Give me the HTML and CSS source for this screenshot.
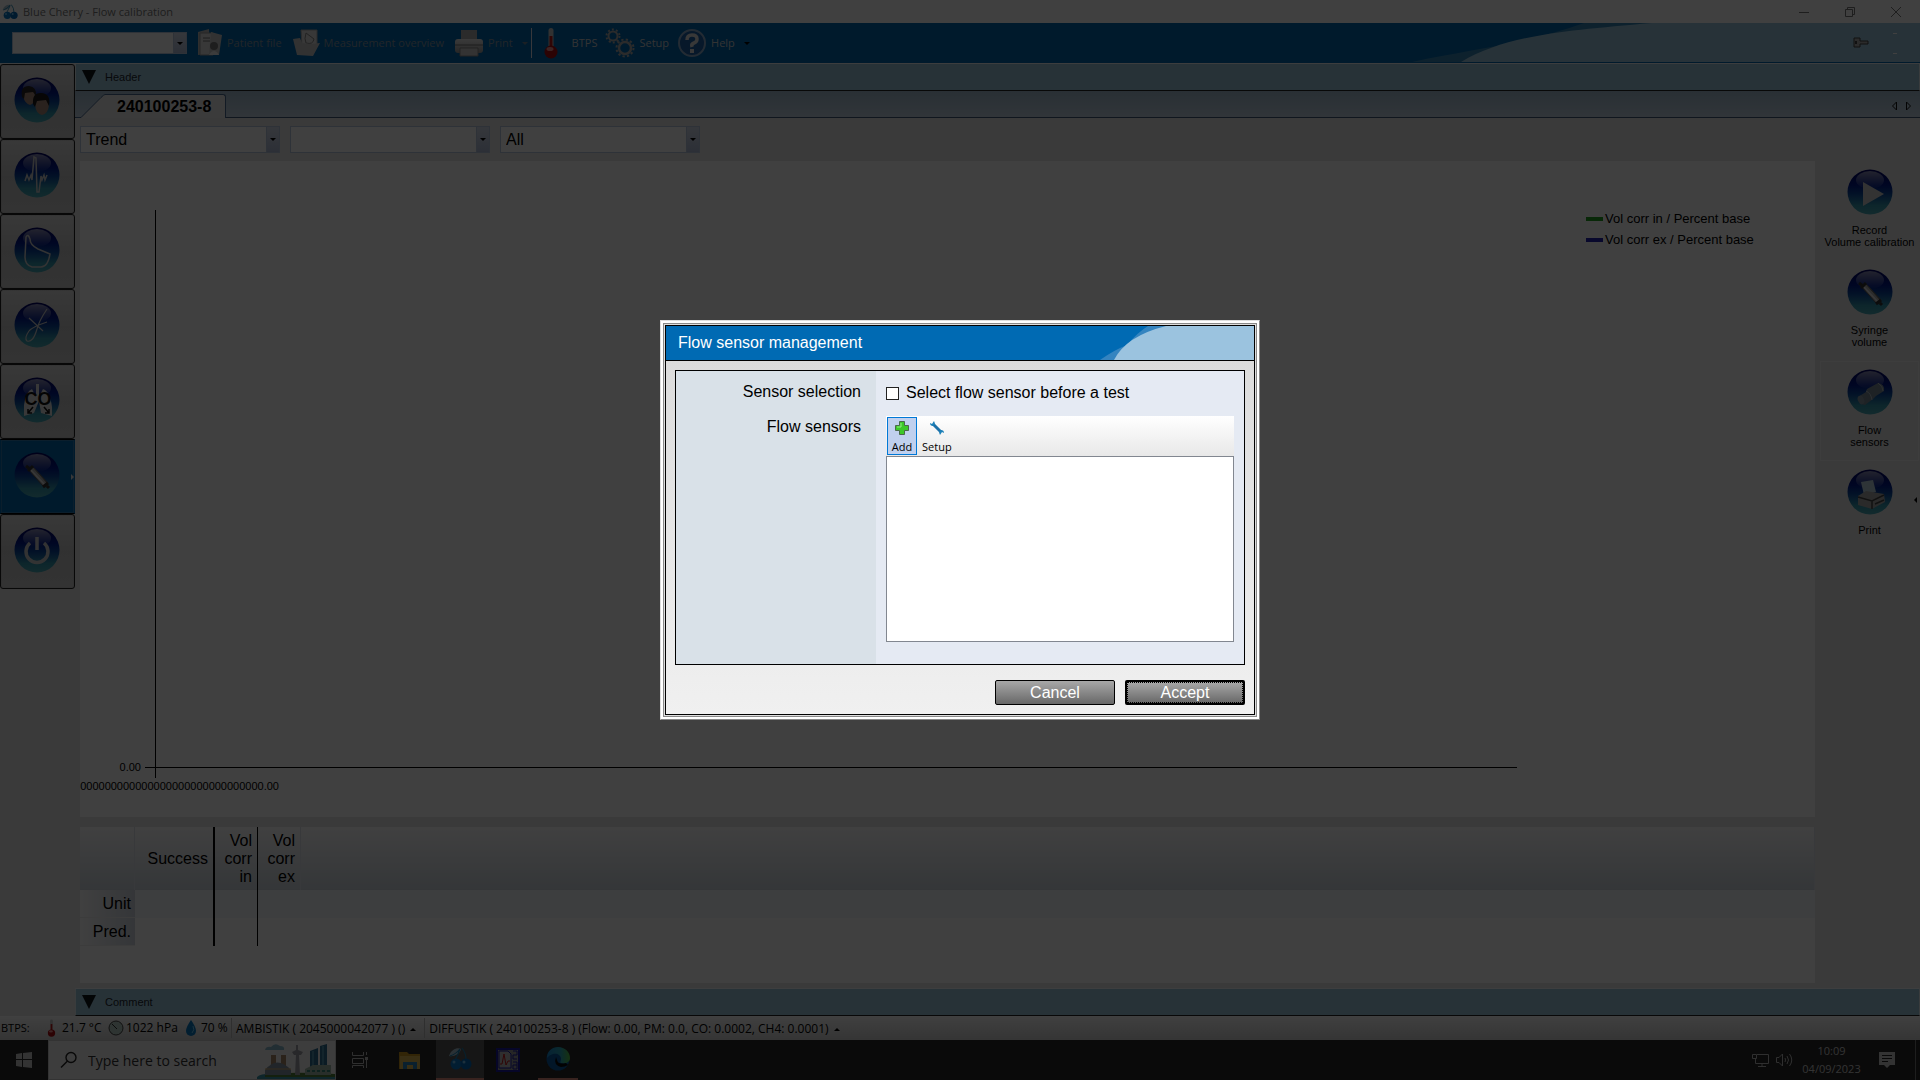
FILE: index.html
```html
<!DOCTYPE html>
<html lang="en">
<head>
<meta charset="utf-8">
<title>Blue Cherry - Flow calibration</title>
<link rel="stylesheet" href="styles.css">
</head>
<body>
<svg width="0" height="0" class="defs" aria-hidden="true">
  <defs>
    <linearGradient id="g-orb" x1="0" y1="0" x2="0" y2="1"><stop offset="0" stop-color="#000060"/><stop offset=".35" stop-color="#001a8c"/><stop offset=".55" stop-color="#0c4a9c"/><stop offset=".8" stop-color="#3496ac"/><stop offset="1" stop-color="#4aa8b4"/></linearGradient>
    <linearGradient id="g-shine" x1="0" y1="0" x2="0" y2="1"><stop offset="0" stop-color="#fff" stop-opacity=".55"/><stop offset="1" stop-color="#fff" stop-opacity="0"/></linearGradient>
    <linearGradient id="g-grey" x1="0" y1="0" x2="0" y2="1"><stop offset="0" stop-color="#e8e8e8"/><stop offset="1" stop-color="#9a9a9a"/></linearGradient>
    <linearGradient id="g-edge" x1="0" y1="0" x2="1" y2="0"><stop offset="0" stop-color="#1a88d0"/><stop offset=".6" stop-color="#2aa8b8"/><stop offset="1" stop-color="#58c840"/></linearGradient>
    <symbol id="orb" viewBox="0 0 46 46"><circle cx="23" cy="23" r="22.5" fill="url(#g-orb)"/><ellipse cx="23" cy="11" rx="14" ry="9" fill="url(#g-shine)"/></symbol>
    <symbol id="cherry" viewBox="0 0 24 24"><path d="M1 9C3 2 10 0 13 2C12 7 6 10 1 9Z" fill="#a8c4d4"/><path d="M2 9Q8 7 12 2M12 2Q10 8 7 13M14 1Q18 6 18 13" fill="none" stroke="#1a80b0" stroke-width="1.2"/><circle cx="8" cy="17" r="5.5" fill="#0878c8"/><circle cx="18" cy="17" r="5.5" fill="#0068b8"/><circle cx="6" cy="15" r="1.5" fill="#70c0f0"/><circle cx="16" cy="15" r="1.5" fill="#70c0f0"/></symbol>
    <symbol id="thermo" viewBox="0 0 16 32"><rect x="5.500" y="1" width="5" height="22" rx="2.500" fill="#c8c8c8"/><rect x="6.500" y="9" width="3" height="15" fill="#c01818"/><circle cx="8" cy="25" r="6.500" fill="#b00c10"/><ellipse cx="7" cy="22" rx="3.500" ry="2" fill="#f09090"/></symbol>
    <symbol id="syringe" viewBox="0 0 46 46"><path d="M14 17L18 14L34 31L33 35L29 34Z" fill="#b0b0b0" stroke="#555" stroke-width="1"/><path d="M17 18L31 33" stroke="#e0e0e0" stroke-width="1.500"/><path d="M20 16L33 31" stroke="#666" stroke-width="1"/><path d="M12 14L16 17M14 19L19 14M29 35L34 31M33 34L35 36" stroke="#333" stroke-width="3"/></symbol>
  </defs>
</svg>
<div class="screen">
  <header class="titlebar">
    <svg class="app-icon" viewBox="0 0 24 24"><use href="#cherry"/></svg>
    <span>Blue Cherry - Flow calibration</span>
    <div class="window-buttons">
      <button aria-label="Minimise"><svg width="12" height="12"><path d="M1 6.500H11" stroke="#777"/></svg></button>
      <button aria-label="Restore"><svg width="12" height="12" fill="none" stroke="#777"><path d="M1.500 3.500H8.500V10.500H1.500ZM3.500 3V1.500H10.500V8.500H9"/></svg></button>
      <button aria-label="Close"><svg width="12" height="12" stroke="#777"><path d="M1 1L11 11M11 1L1 11"/></svg></button>
    </div>
  </header>

  <nav class="toolbar" aria-label="Main toolbar">
    <svg class="swoosh" width="508" height="39" viewBox="0 0 508 39"><path d="M0 39C60 26 110 22 172 0H260V39Z" fill="#3484b4"/><path d="M49 39C95 12 150 8 240 0H508V39Z" fill="#9bc7de"/></svg>
    <div class="combo patient-combo"><select aria-label="Patient"><option></option></select></div>
    <button class="tool patient" disabled><svg width="28" height="30" viewBox="0 0 28 30"><path d="M3 4L14 1L15 26L3 27Z" fill="#bbb"/><path d="M5 5H18V27H5Z" fill="#ddd" stroke="#999"/><path d="M16 4L27 7L24 27H14Z" fill="#c8c8c8"/><path d="M8 10H15M8 13H15" stroke="#777"/><circle cx="19" cy="18" r="4" fill="#777"/><path d="M14 27Q19 19 24 27Z" fill="#eee"/></svg>Patient file</button>
    <button class="tool overview" disabled><svg width="30" height="30" viewBox="0 0 30 30"><path d="M9 2H25V19L10 20Z" fill="#ddd" stroke="#aaa"/><path d="M14 5Q12 11 14 15Q21 17 22 11Z" fill="none" stroke="#888"/><path d="M1 11L8 10L10 15L19 16L28 15L21 28L5 27Z" fill="#c8c8c8"/></svg>Measurement overview</button>
    <button class="tool print" disabled><svg width="30" height="30" viewBox="0 0 30 30"><path d="M7 2H23V13H7Z" fill="#aaa"/><rect x="1" y="11" width="28" height="14" rx="3" fill="url(#g-grey)"/><path d="M1 17H29" stroke="#777"/><path d="M6 20H24V28H6Z" fill="#ccc" stroke="#888"/></svg>Print<i class="caret faded"></i></button>
    <span class="divider"></span>
    <button class="tool btps"><svg width="16" height="32"><use href="#thermo"/></svg>BTPS</button>
    <button class="tool setup"><svg width="30" height="30" viewBox="0 0 30 30" fill="none" stroke="#aaa"><circle cx="8" cy="8" r="4.500" stroke-width="2"/><circle cx="8" cy="8" r="6.500" stroke-width="2" stroke-dasharray="2 2.100"/><circle cx="20" cy="20" r="6" stroke-width="2.500"/><circle cx="20" cy="20" r="8.500" stroke-width="2" stroke-dasharray="2.300 2.200"/></svg>Setup</button>
    <button class="tool help"><svg width="30" height="30" viewBox="0 0 30 30"><circle cx="15" cy="15" r="13" fill="#1c60a8" stroke="#8caccc" stroke-width="2"/><path d="M10 12Q10 7 15 7T20 11Q20 14 17 15T15 19" fill="none" stroke="#ddd" stroke-width="3.500"/><rect x="13" y="21" width="4" height="4" fill="#ddd"/></svg>Help<i class="caret"></i></button>
    <svg class="key" width="16" height="12" viewBox="0 0 16 12" fill="#aaa" stroke="#444"><path d="M1 1H7V4H15V7H7V10H1Z"/><path d="M3 4V7" stroke-width="2"/></svg>
    <span class="grip"></span>
  </nav>

  <div class="workspace">
    <nav class="sidebar" aria-label="Modules">
      <button aria-label="Patients"><svg viewBox="0 0 46 46"><use href="#orb"/><path d="M9 19Q9 12 15 12Q21 12 21 19Q21 27 16 28Q11 27 9 19Z" fill="#a88878"/><path d="M8 20Q6 9 15 9Q23 10 22 19L19 15L11 16L10 22Z" fill="#2a2624"/><path d="M21 28Q21 20 28 20Q35 20 35 28Q34 37 28 38Q22 37 21 28Z" fill="#a88878"/><path d="M19 27Q18 15 28 16Q37 17 35 29L32 23L23 24L21 30Z" fill="#1c1a1a"/></svg></button>
      <button aria-label="Spirometry"><svg viewBox="0 0 46 46"><use href="#orb"/><path d="M11 29L13 23L15 28L17 23L18 28L20 5L22 6L23 40L25 40L27 24L28 28L30 23L31 28L33 23" fill="none" stroke="#ccc" stroke-width="1.500"/></svg></button>
      <button aria-label="Flow volume"><svg viewBox="0 0 46 46"><use href="#orb"/><path d="M12 10Q14 6 16 12Q16 18 24 22L36 27Q34 40 27 40H18Q11 38 11 30Z" fill="none" stroke="#ccc" stroke-width="1.500"/></svg></button>
      <button aria-label="Washout"><svg viewBox="0 0 46 46"><use href="#orb"/><path d="M15 16L29 29M33 7Q25 19 23 27Q19 41 13 39Q10 36 15 29Q18 25 33 20" fill="none" stroke="#ccc" stroke-width="1.200"/></svg></button>
      <button aria-label="CO diffusion"><svg viewBox="0 0 46 46"><use href="#orb"/><path d="M22 7H25V20L29 12Q36 14 38 30V39L27 36L25 24L20 36L10 39V28Q12 14 18 12L22 20Z" fill="#ddd"/><text x="24" y="28" class="co">CO</text><path d="M19 30L14 36M30 30L35 36M14 32V36H18M31 36H35V32" fill="none" stroke="#111" stroke-width="1.500"/></svg></button>
      <button class="active" aria-label="Calibration"><svg viewBox="0 0 46 46"><use href="#orb"/><use href="#syringe"/></svg></button>
      <button aria-label="Power"><svg viewBox="0 0 46 46"><use href="#orb"/><path d="M16 16A11 11 0 1 0 30 16" fill="none" stroke="#ccc" stroke-width="3.500"/><path d="M23 10V23" stroke="#ccc" stroke-width="3.500"/></svg></button>
    </nav>

    <main class="main">
      <button class="section-bar"><i></i>Header</button>
      <div class="tabstrip" role="tablist">
        <svg width="29" height="24" viewBox="0 0 29 24"><path d="M0 23.500H5L25 3.500Q28 .5 29 .5V24H0Z" fill="#ececec"/><path d="M0 23.500H5L25 3.500Q28 .5 29 .5" fill="none" stroke="#4a6a90"/></svg>
        <button class="tab" role="tab" aria-selected="true">240100253-8</button>
        <div class="tab-scroll"><svg width="20" height="10" fill="none" stroke="#111"><path d="M5.500 1V9L1.500 5ZM15.500 1V9L19.500 5Z"/></svg></div>
      </div>

      <div class="content">
        <div class="left">
          <div class="filters">
            <div class="combo"><select aria-label="View"><option>Trend</option></select></div>
            <div class="combo"><select aria-label="Parameter"><option></option></select></div>
            <div class="combo"><select aria-label="Range"><option>All</option></select></div>
          </div>
          <section class="chart">
            <span class="y-label">0.00</span>
            <i class="y-axis"></i>
            <i class="x-axis"></i>
            <div class="x-label">0000000000000000000000000000000.00</div>
            <ul class="legend"><li><i class="in"></i>Vol corr in / Percent base</li><li><i class="ex"></i>Vol corr ex / Percent base</li></ul>
          </section>
          <section class="results">
            <table>
              <thead><tr><th class="c-row"></th><th class="c-success">Success</th><th class="c-in">Vol corr in</th><th class="c-ex">Vol corr ex</th><th></th></tr></thead>
              <tbody>
                <tr class="unit"><th>Unit</th><td class="c-success"></td><td class="c-in"></td><td class="c-ex"></td><td></td></tr>
                <tr><th>Pred.</th><td class="c-success"></td><td class="c-in"></td><td></td><td></td></tr>
              </tbody>
            </table>
          </section>
        </div>
        <aside class="actions">
          <button><svg viewBox="0 0 46 46"><use href="#orb"/><path d="M16 13L37 25L16 37Z" fill="#ccc"/></svg><span>Record<br>Volume calibration</span></button>
          <button><svg viewBox="0 0 46 46"><use href="#orb"/><use href="#syringe"/></svg><span>Syringe<br>volume</span></button>
          <button class="hot"><svg viewBox="0 0 46 46"><use href="#orb"/><path d="M11 28L19 23L20 20L31 14Q38 15 37 22L29 27L26 30L18 36Q11 35 11 28Z" fill="#778894"/><path d="M19 22Q24 24 25 31M31 14Q36 17 36 22" fill="none" stroke="#b0bcc4"/><ellipse cx="14" cy="31" rx="3" ry="4.500" transform="rotate(-25 14 31)" fill="#8898a4"/></svg><span>Flow<br>sensors</span></button>
          <button><svg viewBox="0 0 46 46"><use href="#orb"/><path d="M14 13L26 11L29 23L17 26Z" fill="#b8d0dc"/><path d="M11 27L19 22L37 25L38 33L25 40L11 36Z" fill="#a8a8a8"/><path d="M11 28L25 32L37 26M25 32V40M28 35L37 31" fill="none" stroke="#444" stroke-width="1.500"/></svg><span>Print</span></button>
          <i class="expand"></i>
        </aside>
      </div>
      <button class="section-bar comment"><i></i>Comment</button>
    </main>
  </div>

  <footer class="statusbar">
    <span class="btps-label">BTPS:</span>
    <span class="temp"><svg width="9" height="18" viewBox="2 0 12 32"><use href="#thermo" width="16" height="32"/></svg>21.7 °C</span>
    <span class="pressure"><svg width="16" height="16" viewBox="0 0 16 16"><circle cx="8" cy="8" r="7" fill="#b8d0c8" stroke="#444"/><path d="M4 4L9 9" stroke="#333"/></svg>1022 hPa</span>
    <span class="humid"><svg width="12" height="16" viewBox="0 0 12 16"><path d="M6 0Q11 7 11 11A5 5 0 0 1 1 11Q1 7 6 0Z" fill="#0878c0"/><path d="M8 6Q10 10 7 13" stroke="#70c8f0" fill="none"/></svg>70 %</span>
    <span class="device">AMBISTIK ( 2045000042077 ) () <i class="caret up"></i></span>
    <span class="device">DIFFUSTIK ( 240100253-8 ) (Flow: 0.00, PM: 0.0, CO: 0.0002, CH4: 0.0001) <i class="caret up"></i></span>
  </footer>

  <div class="taskbar">
    <button class="start" aria-label="Start"><svg width="16" height="16" fill="#ccc"><path d="M0 2L6 1V7H0ZM7 1L16 0V7H7ZM0 8H6V15L0 14ZM7 8H16V16L7 15Z"/></svg></button>
    <label class="search">
      <svg width="18" height="18" viewBox="0 0 18 18" fill="none" stroke="#222" stroke-width="1.400"><circle cx="11" cy="6.500" r="5"/><path d="M7.500 10L1 16.500"/></svg>
      <input type="text" placeholder="Type here to search" aria-label="Search">
      <svg class="skyline" width="78" height="38" viewBox="0 0 78 38"><path d="M8 9Q9 5 14 6Q18 1 23 5Q28 5 27 9Z" fill="#88b8cc"/><path d="M0 36Q4 32 20 33H78V38H0Z" fill="#3894a8"/><path d="M8 34Q30 30 78 33V36H8Z" fill="#508038"/><path d="M14 14H19V30H14ZM24 14H29V30H24Z" fill="#a88868"/><path d="M8 29Q20 14 34 29V34H8Z" fill="#8494a4"/><path d="M8 28H34" stroke="#d0a868"/><path d="M39 4H41V9L46 11L44 14H42L43 34H38L39 14H37L35 11L39 9Z" fill="#a0a0a8"/><path d="M53 10L61 7V28H53ZM63 5L70 3V28H63Z" fill="#2c6c90"/><path d="M56 10V27M66 5V27" stroke="#70b0c8"/><path d="M48 28L56 24H74V34H48Z" fill="#a0b8a8"/><path d="M50 30H73" stroke="#388878" stroke-width="2" stroke-dasharray="3 2"/></svg>
    </label>
    <button aria-label="Task view"><svg width="16" height="16" fill="none" stroke="#bbb"><path d="M.5 0V3.500H11.500V0M.5 6.500H11.500V11.500H.5ZM.5 16V13.500H11.500V16M14.500 0V3M14.500 8V16"/><path d="M13 6.500H16" stroke-width="3"/></svg></button>
    <button class="files" aria-label="File Explorer"><svg width="22" height="19"><path d="M0 1H8L10 3H21V18H0Z" fill="#c8941c"/><path d="M1 5H21V18H1Z" fill="#e0b850"/><path d="M4 18V11H18V18H14V14H8V18Z" fill="#2880b8"/></svg></button>
    <button class="running current" aria-label="Blue Cherry"><svg width="24" height="24"><use href="#cherry"/></svg></button>
    <button aria-label="ECG viewer"><svg width="24" height="24" viewBox="0 0 24 24"><rect x="1" y="1" width="22" height="22" fill="#999" stroke="#1818a0" stroke-width="2"/><path d="M3 3H12L15 6V20H3Z" fill="#bbb" stroke="#1818a0"/><path d="M4 16H6L8 6L10 17L12 13H14" fill="none" stroke="#c01818"/><path d="M17 3H21V7H17V11H21M17 14H21V21H17V17H21" fill="none" stroke="#1818a0"/></svg></button>
    <button class="edge" aria-label="Edge"><svg width="24" height="24" viewBox="0 0 24 24"><circle cx="12" cy="12" r="11.500" fill="#0858a0"/><path d="M1 11C1 4 6 0 12 0C19 0 24 5 24 11C24 15 20 17 16 16C13 16 15 14 15 12C15 8 11 6 7 7Q3 8 1 11Z" fill="url(#g-edge)"/><path d="M10 10Q7 18 15 20Q19 20 22 18L20 16Q12 18 11 13Z" fill="#0a0a0a"/></svg></button>
    <div class="tray">
      <svg width="17" height="14" fill="none" stroke="#bbb"><path d="M5 1.500H16.500V10.500H3.500V6M10 10V13M6 13.500H14M.5 1.500H4.500V5.500H.5Z"/></svg>
      <svg width="17" height="14" fill="none" stroke="#bbb"><path d="M.5 4.500H3L6.500 1V13L3 9.500H.5ZM9 5Q10 7 9 9M11 3Q14 7 11 11M13.500 1Q18 7 13.500 13"/></svg>
      <time>10:09<br>04/09/2023</time>
      <svg width="16" height="16"><path d="M0 0H16V13H11L8 16L5 13H0Z" fill="#ccc"/><path d="M3 3.500H13M3 6.500H13M3 9.500H9" stroke="#222"/></svg>
    </div>
  </div>
</div>

<div class="backdrop">
  <form class="dialog" role="dialog" aria-labelledby="dlg-title">
    <div class="dialog-frame">
      <header class="dialog-title">
        <h1 id="dlg-title">Flow sensor management</h1>
        <svg width="154" height="34" viewBox="0 0 154 34"><path d="M0 34Q14 24 27 19Q38 6 48 0H70L40 34Z" fill="#3484c0"/><path d="M14 34Q26 10 66 0H154V34Z" fill="#9bc3df"/></svg>
      </header>
      <div class="dialog-body">
        <div class="fields">
          <span class="field-name">Sensor selection</span>
          <label class="check"><input type="checkbox">Select flow sensor before a test</label>
          <span class="field-name flow">Flow sensors</span>
          <div class="sensors">
            <div class="mini-tools">
              <button type="button" class="selected"><svg width="16" height="16" viewBox="0 0 16 16"><path d="M5.500 1.500H10.500V5.500H14.500V10.500H10.500V14.500H5.500V10.500H1.500V5.500H5.500Z" fill="#3cc828" stroke="#4a6a4a"/><path d="M7 3V7H3" fill="none" stroke="#90f080"/></svg>Add</button>
              <button type="button"><svg width="16" height="16" viewBox="0 0 16 16"><path d="M4 4L12 12" stroke="#1c70a8" stroke-width="3"/><path d="M5 1Q7 5 4 6Q1 6 1 3L3 4ZM11 15Q9 11 12 10Q15 10 15 13L13 12Z" fill="#1c80b8"/></svg>Setup</button>
            </div>
            <div class="list" role="listbox" aria-label="Flow sensors"></div>
          </div>
        </div>
        <div class="buttons"><button type="button">Cancel</button><button type="button" class="default">Accept</button></div>
      </div>
    </div>
  </form>
</div>
</body>
</html>
```
FILE: styles.css
```css
* { box-sizing: border-box; }
body { margin: 0; font: 16px/18px "Liberation Sans", Arial, sans-serif; color: #000; }
button, input, select { font: inherit; color: inherit; margin: 0; padding: 0; border: 0; background: none; border-radius: 0; }
svg { display: block; flex: none; }
.defs { position: absolute; }
.screen { display: flex; flex-direction: column; min-height: 100vh; background: #e8e8e8; }

.titlebar, .toolbar, .statusbar, .taskbar { display: flex; align-items: center; flex: none; font-family: "Open Sans", "Noto Sans", sans-serif; }
.titlebar { height: 23px; background: #fff; font-size: 11px; color: #777; gap: 5px; padding: 0 18px 0 2px; }
.app-icon { width: 16px; height: 16px; }
.window-buttons { margin-left: auto; display: flex; gap: 34px; }

.toolbar { height: 41px; background: #0068b0; border-bottom: 1px solid #f0f4f8; position: relative; font-size: 11px; color: #ccc; padding: 0 23px 0 12px; }
.swoosh { position: absolute; right: 0; top: 0; }
.tool { display: flex; align-items: center; white-space: nowrap; gap: 4px; }
.tool:disabled { color: #8494a0; }
.patient { margin-left: 8px; gap: 4px; }
.overview { margin-left: 10px; gap: 2px; }
.print { margin-left: 10px; }
.btps { margin-left: 11px; gap: 13px; }
.setup, .help { margin-left: 8px; }
.divider { width: 1px; height: 30px; background: #dde; margin-left: 3px; }
.caret { border: 3px solid transparent; border-top-color: #000; border-bottom: 0; margin-left: 5px; }
.caret.faded { border-top-color: #6a7e90; }
.caret.up { border-top: 0; border-bottom: 3px solid #000; display: inline-block; vertical-align: middle; }
.key { margin-left: auto; position: relative; }
.grip { position: relative; width: 4px; height: 21px; margin-left: 24px; border: 1px solid #fff; border-width: 1px 0; }

.combo { position: relative; width: 200px; height: 27px; background: #fff; border: 1px solid #b8c8e0; }
.combo select { width: 100%; height: 100%; appearance: none; padding-left: 5px; }
.combo::before { content: ""; position: absolute; right: 0; top: 0; width: 12px; height: 100%; background: linear-gradient(#d4dcec, #b0bcd8); border-left: 1px solid #b8c8e0; pointer-events: none; }
.combo::after { content: ""; position: absolute; right: 3px; top: 11px; border: 3px solid transparent; border-top-color: #000; border-bottom: 0; pointer-events: none; }
.combo.patient-combo { width: 175px; height: 22px; }
.patient-combo::after { top: 9px; }

.workspace { flex: 1; display: flex; }
.sidebar { width: 75px; flex: none; }
.sidebar button { display: flex; align-items: center; justify-content: center; width: 75px; height: 75px; padding-right: 2px; padding-bottom: 4px; border: 1px solid #222; border-radius: 3px; background: linear-gradient(#e0e0e0, #c4c4c4 50%, #cacaca); box-shadow: inset 0 0 0 1px #aaa4; position: relative; }
.sidebar svg { width: 46px; height: 46px; }
.sidebar .active { background: #0068b0; border-radius: 0; border-color: #000 #0068b0; }
.sidebar .active::after { content: ""; position: absolute; right: 0; top: 34px; border: 3px solid transparent; border-left-color: #ddd; border-right: 0; }
.co { font: bold 18px "Liberation Sans", Arial, sans-serif; text-anchor: middle; fill: #111; }

.main { flex: 1; min-width: 0; display: flex; flex-direction: column; }
.section-bar { display: flex; align-items: center; gap: 9px; flex: none; height: 27px; padding-left: 6px; font-size: 11px; color: #1c2830; background: #9cc6dc; border: 1px solid #e4eef4; border-bottom-color: #222; border-top: 0; }
.section-bar.comment { height: 28px; border-top: 1px solid #f4f8fa; }
.section-bar i { border: 7px solid transparent; border-top: 14px solid #0c1418; border-bottom: 0; }
.tabstrip { display: flex; align-items: flex-end; height: 27px; flex: none; padding-left: 1px; background: linear-gradient(#a4bcd0, #c4d4e4); box-shadow: inset 0 -1px #405878; }
.tab { height: 24px; padding: 0 14px 0 12px; font-weight: bold; background: #ececec; border: 1px solid #4a6a90; border-width: 1px 1px 0 0; border-top-right-radius: 3px; }
.tab-scroll { margin-left: auto; padding: 0 9px 7px 0; }
.content { flex: 1; display: flex; padding: 0 0 5px 5px; }
.left { flex: 1; min-width: 0; display: flex; flex-direction: column; }
.filters { display: flex; gap: 10px; height: 43px; padding-top: 8px; }
.chart { flex: 1; background: #fff; display: grid; grid-template-columns: 65px 10px 1fr 298px; grid-template-rows: 1fr 10px 39px; padding-top: 49px; font-size: 11px; line-height: 14px; }
.y-label { grid-area: 1 / 1; align-self: end; justify-self: end; margin: 0 4px -6px 0; }
.y-axis { grid-area: 1 / 3 / 3; width: 1px; background: #000; }
.x-axis { grid-area: 1 / 2 / 2 / 4; height: 1px; background: #000; align-self: end; }
.x-label { grid-area: 3 / 1 / 4 / 4; width: 199px; padding-top: 1px; overflow: hidden; display: flex; justify-content: flex-end; }
.legend { grid-area: 1 / 4; list-style: none; margin: -2px 0 0 69px; padding: 0; font-size: 13px; line-height: 21px; white-space: nowrap; }
.legend li { display: flex; align-items: center; gap: 2px; }
.legend i { width: 17px; height: 4px; background: #20a020; }
.legend .ex { background: #2020b0; }
.results { background: #fff; margin-top: 10px; height: 156px; }
.results table { width: 100%; border-collapse: separate; border-spacing: 0; table-layout: fixed; }
.results th { font-weight: normal; text-align: right; padding: 0 5px; height: 63px; }
.results thead th { background: linear-gradient(#fff, #d0d8e0); border-right: 1px solid #e0e4ea; }
.results .c-row { width: 55px; }
.results .c-success { width: 80px; border-right: 2px solid #000; }
.results .c-in { width: 43px; border-right: 1px solid #000; }
.results .c-ex { width: 43px; }
.results tbody th { height: 28px; padding-right: 4px; background: linear-gradient(90deg, #fff, #d0d6e0); border-bottom: 1px solid #eee; }
.results td { height: 28px; padding: 0; }
.results .unit td { background: #f4f6fa; }

.actions { width: 105px; flex: none; padding: 43px 1px 0 5px; position: relative; font-size: 11px; line-height: 12px; }
.actions button { width: 99px; height: 100px; padding-top: 8px; display: flex; flex-direction: column; align-items: center; gap: 9px; justify-content: flex-start; white-space: nowrap; }
.actions button svg { width: 46px; height: 46px; }
.actions button.hot { border: 1px solid #f4f4f4; padding-top: 7px; }
.expand { position: absolute; right: 3px; top: 379px; border: 3px solid transparent; border-right-color: #000; border-left: 0; }

.statusbar { height: 24px; background: linear-gradient(#fff, #d0d0d0); font-size: 12px; white-space: nowrap; }
.statusbar span { display: flex; align-items: center; }
.btps-label { width: 47px; font-size: 11px; padding-left: 1px; }
.temp { gap: 6px; width: 61px; }
.pressure { gap: 2px; width: 77px; }
.humid { gap: 4px; width: 46px; }
.device { border-left: 1px solid #bbb; padding: 2px 8px 0 4px; }
.device .caret { margin-left: 5px; }

.taskbar { height: 40px; background: #282828; color: #ccc; }
.taskbar > button { width: 48px; height: 40px; display: flex; align-items: center; justify-content: center; }
.search { display: flex; align-items: center; width: 288px; height: 40px; padding-left: 11px; background: #f2f2f2; border: 1px solid #ccc; }
.search input { flex: 1; min-width: 0; padding: 2px 0 0 10px; font-size: 14px; color: #222; }
.search input::placeholder { color: #333; opacity: 1; }
.taskbar .files { width: 52px; }
.taskbar .current { background: #585858; border-bottom: 2px solid #e08c7c; }
.taskbar .edge { width: 40px; margin-left: 6px; border-bottom: 2px solid #e08c7c; }
.tray { margin-left: auto; margin-right: 4px; padding-right: 20px; height: 40px; border-right: 1px solid #777; display: flex; align-items: center; gap: 7px; }
.tray time { font-size: 11px; line-height: 18px; text-align: center; width: 63px; margin: 0 9px 0 0; }

.backdrop { position: fixed; inset: 0; background: #000000bf; display: flex; align-items: center; justify-content: center; padding-bottom: 40px; }
.dialog { width: 600px; background: #fff; border: 1px solid #ddd; border-color: #ddd #888 #888 #ddd; padding: 2px; }
.dialog-frame { border: 1px solid #888; padding: 1px; background: #ddd; }
.dialog-title { height: 36px; display: flex; align-items: center; background: #006ab3; border: 1px solid #000; padding-left: 12px; }
.dialog-title h1 { flex: 1; margin: 0; font-size: 16px; font-weight: normal; color: #fff; }
.dialog-body { border: 1px solid #000; border-top: 0; background: linear-gradient(#dcdcdc, #f0f0f0); padding: 9px; }
.fields { display: grid; grid-template-columns: 200px 1fr; border: 1px solid #000; background: linear-gradient(90deg, #d9e1e8 200px, #e5eaf3 200px); padding-bottom: 22px; }
.field-name { text-align: right; padding: 12px 15px 0 0; height: 45px; }
.field-name.flow { padding-top: 2px; }
.check { display: flex; align-items: center; gap: 7px; padding-left: 10px; height: 44px; }
.check input { appearance: none; width: 13px; height: 13px; border: 1px solid #222; background: #fff; }
.sensors { padding: 0 10px; }
.mini-tools { display: flex; gap: 3px; height: 40px; padding: 1px; background: linear-gradient(#fff, #e8e8e8); font: 11px/14px "Open Sans", "Noto Sans", sans-serif; }
.mini-tools button { display: flex; flex-direction: column; align-items: center; gap: 4px; min-width: 30px; height: 38px; padding: 2px 1px; border: 1px solid transparent; }
.mini-tools .selected { background: #c0d0ee; border-color: #0078d7; }
.list { height: 186px; background: #fff; border: 1px solid #828790; }
.buttons { display: flex; justify-content: flex-end; gap: 10px; padding-top: 15px; }
.buttons button { width: 120px; height: 25px; color: #fff; border: 1px solid #000; border-radius: 2px; background: linear-gradient(#a8a8a8, #686868); }
.buttons .default { border-width: 2px; outline: 1px dotted #000; outline-offset: -3px; }
```
